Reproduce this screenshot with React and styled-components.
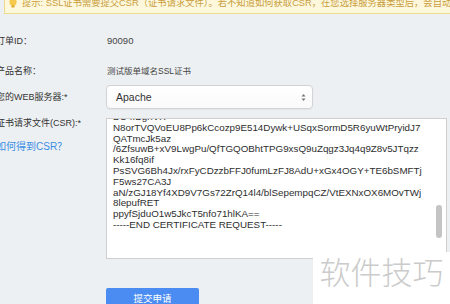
import React from "react";
import styled, { createGlobalStyle } from "styled-components";

const GlobalStyle = createGlobalStyle`
  html, body {
    margin: 0;
    padding: 0;
    background: #edf0f2;
    overflow: hidden;
  }
  #root {
    width: 450px;
    height: 304px;
    overflow: hidden;
  }
`;

const Page = styled.div`
  position: relative;
  width: 450px;
  height: 304px;
  overflow: hidden;
  background: #edf0f2;
  font-family: "Liberation Sans", "Noto Sans CJK SC", sans-serif;
  color: #333;
`;

const Banner = styled.div`
  margin-left: 4px;
  height: 13px;
  background: #fdf8dc;
  border-left: 1px solid #efd98c;
  border-bottom: 1px solid #efd98c;
  overflow: hidden;
  display: flex;
  align-items: flex-start;
  white-space: nowrap;
`;

const Tip = styled.span`
  display: flex;
  align-items: center;
  gap: 5px;
  margin-top: -5px;
  padding-left: 4px;
  font-size: 9.3px;
  line-height: 16px;
  color: #c99d3c;
`;

const Form = styled.div`
  margin-left: -4px;
  display: flex;
  flex-direction: column;
`;

const Row = styled.div`
  display: flex;
  align-items: flex-start;
  margin-top: ${(p) => p.$top}px;
`;

const Label = styled.div`
  width: 110px;
  flex-shrink: 0;
  font-size: 9px;
  line-height: ${(p) => p.$lh || 22}px;
  color: #333;
  display: flex;
  flex-direction: column;
`;

const HelpLink = styled.a`
  color: #3a8ee6;
  font-size: 10px;
  line-height: 12px;
  margin-top: 13px;
  text-decoration: none;
`;

const Value = styled.div`
  font-size: ${(p) => p.$size || 9}px;
  line-height: 22px;
  padding-left: 1px;
  color: #444;
`;

const Select = styled.div`
  box-sizing: border-box;
  width: 207px;
  height: 24px;
  background: linear-gradient(#ffffff, #fafafa);
  border: 1px solid #d3d3d3;
  border-radius: 4px;
  box-shadow: 0 1px 1px rgba(0, 0, 0, 0.04);
  display: flex;
  align-items: center;
  justify-content: space-between;
  padding: 0 6px 0 9px;
  font-size: 10.5px;
  color: #333;
`;

const TextBox = styled.div`
  position: relative;
  box-sizing: border-box;
  width: 341px;
  height: 141px;
  background: #fff;
  border: 1px solid #cfcfcf;
  overflow: hidden;
`;

const CsrText = styled.pre`
  margin: -7px 0 0 6px;
  font-family: "Liberation Sans", Arial, sans-serif;
  font-size: 9.8px;
  line-height: 10.8px;
  color: #2e2e2e;
  white-space: pre;
`;

const Thumb = styled.div`
  position: absolute;
  right: 4px;
  top: 86px;
  width: 6px;
  height: 33px;
  border-radius: 3px;
  background: #c4c4c4;
`;

const SubmitButton = styled.button`
  margin: 29px 0 0 110px;
  width: 93px;
  height: 22px;
  border: none;
  border-radius: 2px;
  background: #4a8cf2;
  color: #fff;
  font-family: "Noto Sans CJK SC", sans-serif;
  font-size: 9.5px;
  line-height: 18px;
  padding: 0 0 3px;
  align-self: flex-start;
`;

const Watermark = styled.div`
  position: absolute;
  right: 0;
  bottom: 0;
  width: 137px;
  height: 52px;
  background: #fff;
  display: flex;
  align-items: flex-start;
  justify-content: center;
  font-family: "Noto Sans CJK SC", sans-serif;
  font-weight: 300;
  font-size: 31px;
  line-height: 38px;
  color: #cbcbcb;
`;

const Bulb = () => (
  <svg width="8" height="11" viewBox="0 0 8 11">
    <circle cx="4" cy="4" r="3.6" fill="#f6c94a" />
    <rect x="2.4" y="7" width="3.2" height="2.6" rx="0.6" fill="#e2ae30" />
  </svg>
);

const Arrows = () => (
  <svg width="5" height="9" viewBox="0 0 5 9">
    <path d="M2.5 1 L4.5 3.6 L0.5 3.6 Z" fill="#777" />
    <path d="M2.5 8 L4.5 5.4 L0.5 5.4 Z" fill="#777" />
  </svg>
);

const csrLines = [
  "BO4fBgnVX",
  "N8orTVQVoEU8Pp6kCcozp9E514Dywk+USqxSormD5R6yuWtPryidJ7",
  "QATmcJk5az",
  "/6ZfsuwB+xV9LwgPu/QfTGQOBhtTPG9xsQ9uZqgz3Jq4q9Z8v5JTqzz",
  "Kk16fq8if",
  "PsSVG6Bh4Jx/rxFyCDzzbFFJ0fumLzFJ8AdU+xGx4OGY+TE6bSMFTj",
  "F5ws27CA3J",
  "aN/zGJ18Yf4XD9V7Gs72ZrQ14l4/blSepempqCZ/VtEXNxOX6MOvTWj",
  "8lepufRET",
  "ppyfSjduO1w5JkcT5nfo71hlKA==",
  "-----END CERTIFICATE REQUEST-----",
];

export default function App() {
  return (
    <Page>
      <GlobalStyle />
      <Banner>
        <Tip>
          <Bulb />
          提示: SSL证书需要提交CSR（证书请求文件）。若不知道如何获取CSR，在您选择服务器类型后，会自动生成
        </Tip>
      </Banner>
      <Form>
        <Row $top={16}>
          <Label>订单ID：</Label>
          <Value $size={9.5}>90090</Value>
        </Row>
        <Row $top={8}>
          <Label>产品名称：</Label>
          <Value $size={8.5}>测试版单域名SSL证书</Value>
        </Row>
        <Row $top={3}>
          <Label $lh={24}>您的WEB服务器:*</Label>
          <Select>
            <span>Apache</span>
            <Arrows />
          </Select>
        </Row>
        <Row $top={9}>
          <Label $lh={10}>
            证书请求文件(CSR):*
            <HelpLink href="#">如何得到CSR？</HelpLink>
          </Label>
          <TextBox>
            <CsrText>{csrLines.join("\n")}</CsrText>
            <Thumb />
          </TextBox>
        </Row>
        <SubmitButton>提交申请</SubmitButton>
      </Form>
      <Watermark>软件技巧</Watermark>
    </Page>
  );
}
